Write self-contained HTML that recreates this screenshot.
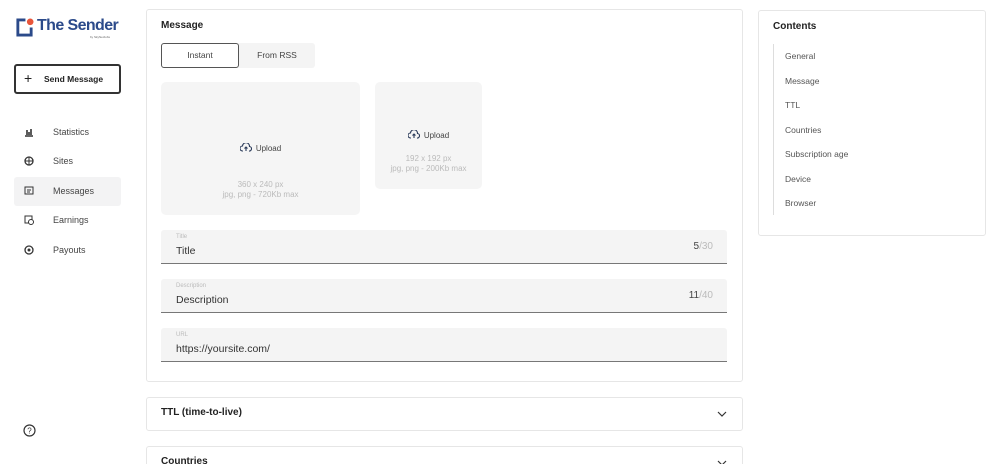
<!DOCTYPE html>
<html><head><style>
*{box-sizing:border-box;margin:0;padding:0}
html,body{width:1000px;height:464px;overflow:hidden}
body{background:#fff;font-family:"Liberation Sans",sans-serif;color:#222;position:relative}
.a{position:absolute}
.card{position:absolute;border:1px solid #e6e6e6;border-radius:3px;background:#fff}
.nav{position:absolute;left:14px;width:107px;height:29px;font-size:9px;color:#444}
.nav span{position:absolute;left:39px;top:9px}
.nav svg{position:absolute;left:10px;top:9px}
.field{position:absolute;left:161px;width:566px;height:34px;background:#f4f4f4;border-bottom:1px solid #777;border-radius:3px 3px 0 0}
.field .l{position:absolute;left:15px;top:4px;font-size:6px;color:#bbb}
.field .v{position:absolute;left:15px;top:15px;font-size:10.5px;color:#333}
.field .c{position:absolute;right:14px;top:11px;font-size:10px;color:#444}
.field .c i{font-style:normal;color:#bbb}
.up{position:absolute;background:#f5f5f5;border-radius:5px;font-size:8px;color:#444;text-align:center}
.up .h{font-size:8px;color:#bbb;line-height:10px}
.ct{position:absolute;left:785px;font-size:8.5px;color:#555}
</style></head><body>
<svg class="a" style="left:15px;top:18px" width="19" height="19" viewBox="0 0 20 20"><path d="M11 2H3v16h14v-8" fill="none" stroke="#2b4a8a" stroke-width="3"/><circle cx="16" cy="4" r="3.5" fill="#e8553a"/></svg>
<div class="a" style="left:37px;top:17px;font-size:16px;font-weight:bold;color:#2b4a8a;letter-spacing:-0.6px">The Sender</div>
<div class="a" style="left:90px;top:35px;font-size:3px;color:#666">by SkyNetJobs</div>
<div class="a" style="left:14px;top:64px;width:107px;height:30px;border:2px solid #333;border-radius:3px;font-size:8.5px;font-weight:bold"><span class="a" style="left:8px;top:4px;font-size:14px;font-weight:normal">+</span><span class="a" style="left:28px;top:8px">Send Message</span></div>
<div class="nav" style="top:118px"><svg width="10" height="10"><path d="M1 9h8M3 8V3M5 8V5M7 8V2" stroke="#333" stroke-width="1.6"/></svg><span>Statistics</span></div>
<div class="nav" style="top:147px"><svg width="10" height="10"><circle cx="5" cy="5" r="4" fill="none" stroke="#333" stroke-width="1.3"/><path d="M1 5h8M5 1v8" stroke="#333"/></svg><span>Sites</span></div>
<div class="nav" style="top:177px;background:#f3f3f4;border-radius:3px"><svg width="10" height="10"><rect x="1" y="1" width="8" height="7" fill="none" stroke="#333"/><path d="M3 4h4M3 6h3" stroke="#333"/></svg><span>Messages</span></div>
<div class="nav" style="top:206px"><svg width="10" height="10"><rect x="1" y="1" width="7" height="7" fill="none" stroke="#333"/><circle cx="7" cy="7" r="2.5" fill="#fff" stroke="#333"/></svg><span>Earnings</span></div>
<div class="nav" style="top:236px"><svg width="10" height="10"><circle cx="5" cy="5" r="4" fill="none" stroke="#333" stroke-width="1.3"/><circle cx="5" cy="5" r="1.5" fill="#333"/></svg><span>Payouts</span></div>
<svg class="a" style="left:23px;top:424px" width="13" height="13"><circle cx="6.5" cy="6.5" r="5.5" fill="none" stroke="#333" stroke-width="1.2"/><text x="6.5" y="9.5" font-size="8" text-anchor="middle" fill="#333" font-family="Liberation Sans">?</text></svg>

<div class="card" style="left:146px;top:9px;width:597px;height:373px"></div>
<div class="a" style="left:161px;top:20px;font-size:10px;font-weight:bold">Message</div>
<div class="a" style="left:161px;top:43px;width:154px;height:25px;background:#f4f4f4;border-radius:3px"></div>
<div class="a" style="left:161px;top:43px;width:78px;height:25px;border:1px solid #555;border-radius:3px;background:#fff;font-size:8.5px;color:#444;text-align:center;line-height:23px">Instant</div>
<div class="a" style="left:239px;top:43px;width:76px;height:25px;font-size:8.5px;color:#444;text-align:center;line-height:25px">From RSS</div>
<div class="up" style="left:161px;top:82px;width:199px;height:133px"><div class="a" style="left:0;right:0;top:61px">
<svg width="12" height="9" style="vertical-align:-1px;margin-right:4px"><path d="M3 8H2.5a2.5 2.5 0 0 1 0-5 3.5 3.5 0 0 1 7 0.5 2.2 2.2 0 0 1-0.5 4.5H9M6 8V4M4.5 5.5 6 4l1.5 1.5" fill="none" stroke="#2b3b5a" stroke-width="1.1"/></svg>Upload</div>
<div class="h a" style="left:0;right:0;top:98px">360 x 240 px<br>jpg, png - 720Kb max</div></div>
<div class="up" style="left:375px;top:82px;width:107px;height:107px"><div class="a" style="left:0;right:0;top:48px">
<svg width="12" height="9" style="vertical-align:-1px;margin-right:4px"><path d="M3 8H2.5a2.5 2.5 0 0 1 0-5 3.5 3.5 0 0 1 7 0.5 2.2 2.2 0 0 1-0.5 4.5H9M6 8V4M4.5 5.5 6 4l1.5 1.5" fill="none" stroke="#2b3b5a" stroke-width="1.1"/></svg>Upload</div>
<div class="h a" style="left:0;right:0;top:72px">192 x 192 px<br>jpg, png - 200Kb max</div></div>
<div class="field" style="top:230px"><div class="l">Title</div><div class="v">Title</div><div class="c">5<i>/30</i></div></div>
<div class="field" style="top:279px"><div class="l">Description</div><div class="v">Description</div><div class="c">11<i>/40</i></div></div>
<div class="field" style="top:328px"><div class="l">URL</div><div class="v">https://yoursite.com/</div></div>

<div class="card" style="left:146px;top:397px;width:597px;height:34px"><div class="a" style="left:14px;top:9px;font-size:10px;font-weight:bold">TTL (time-to-live)</div><svg class="a" style="left:570px;top:13px" width="10" height="7"><path d="M1 1l4 4 4-4" fill="none" stroke="#333" stroke-width="1.2"/></svg></div>
<div class="card" style="left:146px;top:446px;width:597px;height:30px"><div class="a" style="left:14px;top:9px;font-size:10px;font-weight:bold">Countries</div><svg class="a" style="left:570px;top:13px" width="10" height="7"><path d="M1 1l4 4 4-4" fill="none" stroke="#333" stroke-width="1.2"/></svg></div>

<div class="card" style="left:758px;top:10px;width:228px;height:226px"></div>
<div class="a" style="left:773px;top:21px;font-size:10px;font-weight:bold">Contents</div>
<div class="a" style="left:773px;top:44px;width:1px;height:171px;background:#ddd"></div>
<div class="ct" style="top:51px">General</div>
<div class="ct" style="top:76px">Message</div>
<div class="ct" style="top:100px">TTL</div>
<div class="ct" style="top:125px">Countries</div>
<div class="ct" style="top:149px">Subscription age</div>
<div class="ct" style="top:174px">Device</div>
<div class="ct" style="top:198px">Browser</div>
</body></html>
